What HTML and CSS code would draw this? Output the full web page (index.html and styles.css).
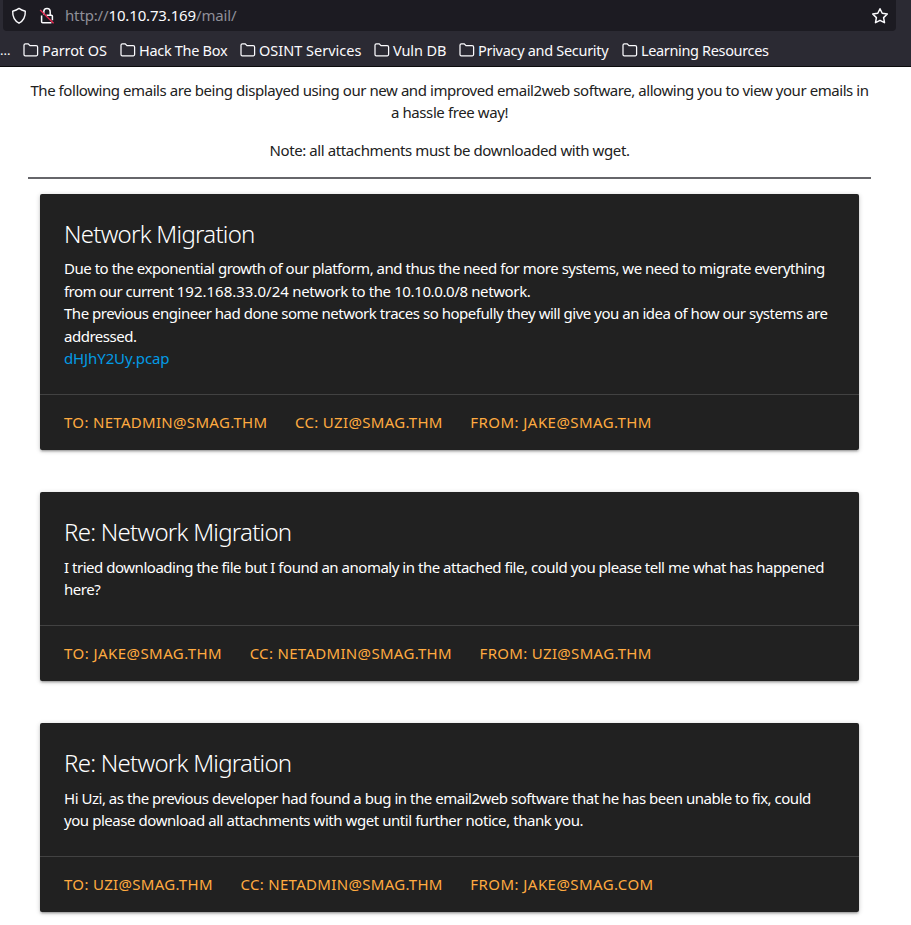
FILE: index.html
```
<!DOCTYPE html>
<html lang="en">
<head>
<meta charset="utf-8">
<title>Mail</title>
<link rel="stylesheet" href="styles.css">
</head>
<body>
<svg class="defs" aria-hidden="true"><symbol id="folder" viewBox="0 0 16 14"><path d="M1 11.5V2.2Q1 .8 2.4.8H5.2L7 2.7H13.2Q14.6 2.7 14.6 4.1V11.6Q14.6 12.8 13.4 12.8H2.3Q1 12.8 1 11.5Z" fill="none" stroke="currentColor" stroke-width="1.25"/></symbol></svg>
<header class="browser">
  <div class="urlbar">
    <svg class="shield" viewBox="0 0 16 18"><path d="M8 1.4Q10.5 3.2 14.3 4.2C14.5 9.5 12.6 13.6 8 16.2 3.4 13.6 1.5 9.5 1.7 4.2Q5.5 3.2 8 1.4Z" fill="none" stroke="currentColor" stroke-width="1.4" stroke-linejoin="round"/></svg>
    <svg class="lock" viewBox="0 0 16 18"><path d="M4.8 7.6V4.8a3.2 3.2 0 0 1 6.4 0V7.6M7.5 8.2H12.4Q13.4 8.2 13.4 9.2V13.2M2.6 8.6V14.8Q2.6 15.8 3.6 15.8H12.4" fill="none" stroke="currentColor" stroke-width="1.5"/><path d="M1.2 3 14.6 16.2" stroke="#e22850" stroke-width="1.4"/></svg>
    <span class="url">http://<b>10.10.73.169</b>/mail/</span>
    <svg class="star" viewBox="0 0 18 18"><path d="M9 1.7 11.2 6.3 16.3 7 12.6 10.6 13.5 15.7 9 13.3 4.5 15.7 5.4 10.6 1.7 7 6.8 6.3Z" fill="none" stroke="currentColor" stroke-width="1.5" stroke-linejoin="round"/></svg>
  </div>
  <nav class="bookmarks">
    <span class="more">...</span>
    <a class="bm b1"><svg><use href="#folder"/></svg><span>Parrot OS</span></a>
    <a class="bm b2"><svg><use href="#folder"/></svg><span>Hack The Box</span></a>
    <a class="bm b3"><svg><use href="#folder"/></svg><span>OSINT Services</span></a>
    <a class="bm b4"><svg><use href="#folder"/></svg><span>Vuln DB</span></a>
    <a class="bm b5"><svg><use href="#folder"/></svg><span>Privacy and Security</span></a>
    <a class="bm b6"><svg><use href="#folder"/></svg><span>Learning Resources</span></a>
  </nav>
</header>
<main class="container">
  <p class="intro"><span class="tight">The following emails are being displayed using our new and improved email2web software, allowing you to view your emails in</span><br>a hassle free way!</p>
  <p class="intro">Note: all attachments must be downloaded with wget.</p>
  <hr>
  <article class="card">
    <div class="content">
      <h2>Network Migration</h2>
      <p>Due to the exponential growth of our platform, and thus the need for more systems, we need to migrate everything<br><span class="lead">from our current </span><span class="numeric"><span class="ip">192.168.33.0/24</span> network to the 10.10.0.0/8 network.</span><br>The previous engineer had done some network traces so hopefully they will give you an idea of how our systems are<br>addressed.</p>
      <a class="file">dHJhY2Uy.pcap</a>
    </div>
    <div class="action"><a>To: netadmin@smag.thm</a><a>Cc: uzi@smag.thm</a><a class="wide">From: jake@smag.thm</a></div>
  </article>
  <article class="card">
    <div class="content">
      <h2>Re: Network Migration</h2>
      <p>I tried downloading the file but I found an anomaly in the attached file, could you please tell me what has happened<br>here?</p>
    </div>
    <div class="action"><a class="wide">To: jake@smag.thm</a><a>Cc: netadmin@smag.thm</a><a>From: uzi@smag.thm</a></div>
  </article>
  <article class="card">
    <div class="content">
      <h2>Re: Network Migration</h2>
      <p>Hi Uzi, as the previous developer had found a bug in the email2web software that he has been unable to fix, could<br><span class="tight">you please download all attachments with wget until further notice, thank you.</span></p>
    </div>
    <div class="action"><a>To: uzi@smag.thm</a><a>Cc: netadmin@smag.thm</a><a class="wide">From: jake@smag.com</a></div>
  </article>
</main>
</body>
</html>
```
FILE: styles.css
```
* { box-sizing: border-box; }
body {
  margin: 0;
  height: 925px;
  overflow: hidden;
  background: #fff;
  color: #212121;
  font: 15px/22.5px "Noto Sans", sans-serif;
  white-space: nowrap;
}
.defs { display: block; width: 0; height: 0; }
.browser { height: 67px; background: #2b2a33; color: #fbfbfe; border-bottom: 1px solid #0c0c0d; }
.urlbar {
  display: flex;
  align-items: center;
  width: 893px;
  height: 31px;
  margin-left: 3px;
  padding: 0 7px 0 8px;
  background: #1c1b22;
  border-radius: 0 0 4px 4px;
}
.shield { width: 16px; height: 18px; }
.lock { width: 16px; height: 18px; margin-left: 12px; }
.url { margin-left: 10px; color: #8f8f98; letter-spacing: -0.15px; }
.url b { font-weight: 400; color: #fbfbfe; }
.star { width: 18px; height: 18px; margin-left: auto; }
.bookmarks { display: flex; align-items: center; height: 35px; padding-top: 3px; font-size: 14.5px; }
.more { width: 23px; font-size: 13px; }
.bm { display: flex; align-items: center; gap: 3px; letter-spacing: -0.1px; }
.bm svg { width: 16px; height: 14px; flex: none; }
.b1 { width: 97px; }
.b2 { width: 120px; letter-spacing: -0.3px; }
.b3 { width: 134px; letter-spacing: 0; }
.b4 { width: 85px; }
.b5 { width: 163px; letter-spacing: -0.3px; }
.b6 { letter-spacing: -0.35px; }
.container { width: 843px; margin: 11.5px 0 0 28px; }
.intro { margin: 0 0 15px; text-align: center; letter-spacing: -0.4px; }
.intro .tight { letter-spacing: -0.435px; }
hr { height: 2px; margin: 16px 0 14.6px; border: 0; background: #66666a; }
.card {
  margin: 0 12px 42.1px;
  background: #212121;
  color: #fff;
  border-radius: 2px;
  box-shadow: 0 2px 2px rgba(0,0,0,.14), 0 3px 1px -2px rgba(0,0,0,.12), 0 1px 5px rgba(0,0,0,.2);
}
.content { padding: 24px 24px 24.3px; }
h2 { margin: 0 0 7.7px; font-size: 24px; line-height: 32px; font-weight: 300; letter-spacing: -0.74px; }
.content p { margin: 0; letter-spacing: -0.477px; }
.content .tight { letter-spacing: -0.44px; }
.content .lead { letter-spacing: -0.55px; }
.content .numeric { letter-spacing: -0.38px; }
.content .ip { letter-spacing: 0; }
.file { display: block; color: #039be5; letter-spacing: -0.11px; }
.action { display: flex; gap: 27.6px; padding: 16px 24px 16.3px; border-top: 1px solid #424242; text-transform: uppercase; color: #ffab40; letter-spacing: 0.31px; }
.action .wide { letter-spacing: 0.44px; }
```
